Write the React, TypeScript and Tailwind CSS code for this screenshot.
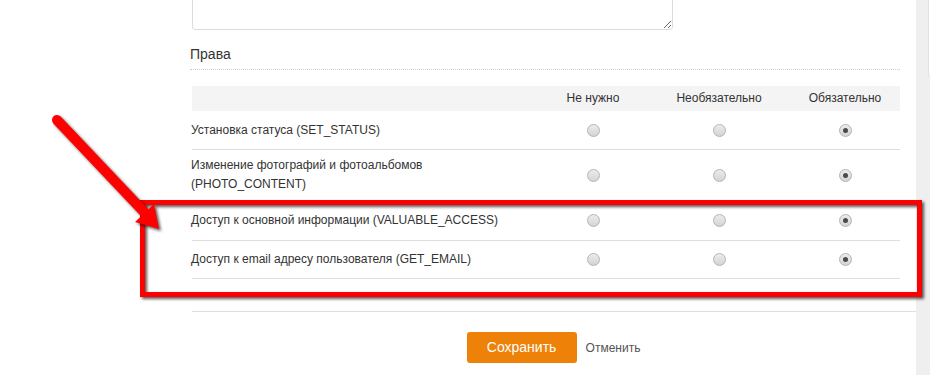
import React from "react"

const rows = [
  { label: ["Установка статуса (SET_STATUS)"], h: "h-[39px]" },
  { label: ["Изменение фотографий и фотоальбомов", "(PHOTO_CONTENT)"], h: "h-[51px]" },
  { label: ["Доступ к основной информации (VALUABLE_ACCESS)"], h: "h-[40px]" },
  { label: ["Доступ к email адресу пользователя (GET_EMAIL)"], h: "h-[38px]" },
]

function Radio({ checked }: { checked?: boolean }) {
  return (
    <span className="w-[13px] h-[13px] rounded-full border border-[#b4b4b4] bg-gradient-to-b from-[#ececec] to-[#d4d4d4] flex items-center justify-center">
      {checked && <span className="w-[5px] h-[5px] rounded-full bg-[#4a4a4a]" />}
    </span>
  )
}

export default function App() {
  return (
    <div className="relative w-[930px] h-[375px] overflow-hidden bg-white font-['Liberation_Sans',Arial,sans-serif] text-[#333]">
      <div className="flex h-full">
        <div className="w-[190px] shrink-0" />

        {/* main form */}
        <div className="w-[726px] shrink-0">
          <div className="h-[30px] flex items-end overflow-hidden pl-[2px]">
            <textarea
              readOnly
              className="block shrink-0 w-[481px] h-[60px] border border-[#dcdcdc] rounded-[3px] bg-white"
            />
          </div>

          <div className="mt-[14px] w-[710px] pb-[5px] border-b border-dotted border-[#cfcfcf] text-[14px] leading-[20px]">
            Права
          </div>

          <div className="mt-[16px] ml-[2px] w-[708px] text-[12px] leading-[19px]">
            <div className="grid grid-cols-[338px_126px_126px_118px] h-[25px] items-center bg-[#f4f4f4]">
              <div />
              <div className="text-center">Не нужно</div>
              <div className="text-center">Необязательно</div>
              <div className="text-center pl-2">Обязательно</div>
            </div>
            {rows.map((r) => (
              <div
                key={r.label[0]}
                className={`grid grid-cols-[338px_126px_126px_118px] items-center border-b border-[#dedede] ${r.h}`}
              >
                <div className="-ml-px">
                  {r.label.map((l) => (
                    <div key={l}>{l}</div>
                  ))}
                </div>
                <div className="flex justify-center">
                  <Radio />
                </div>
                <div className="flex justify-center">
                  <Radio />
                </div>
                <div className="flex justify-center pl-2">
                  <Radio checked />
                </div>
              </div>
            ))}
          </div>

          <div className="mt-[32px] ml-[2px] border-t border-[#dedede]" />

          <div className="mt-[20px] flex items-center justify-center gap-[9px] pl-[1px]">
            <button className="w-[110px] h-[31px] rounded-[3px] bg-[#ee8208] text-white text-[14px]">
              Сохранить
            </button>
            <span className="text-[12px] text-[#555]">Отменить</span>
          </div>
        </div>

        {/* right gutter */}
        <div className="flex-1 bg-[#efefef] pl-[12px]">
          <div className="h-[76px] bg-white border-l border-b border-[#e2e2e2]" />
        </div>
      </div>

      {/* annotation: red box and arrow */}
      <div className="absolute left-[140px] top-[200px] w-[782px] h-[97px] border-[5px] border-[#ff0000] drop-shadow-[2px_2px_1.5px_rgba(0,0,0,0.65)] pointer-events-none" />
      <svg
        className="absolute left-0 top-0 pointer-events-none drop-shadow-[2px_2px_1.5px_rgba(0,0,0,0.65)]"
        width="200"
        height="260"
        viewBox="0 0 200 260"
      >
        <line x1="57" y1="120" x2="146" y2="214" stroke="#ff0000" strokeWidth="10" strokeLinecap="round" />
        <polygon points="135,222 154,204 159,229" fill="#ff0000" />
      </svg>
    </div>
  )
}
